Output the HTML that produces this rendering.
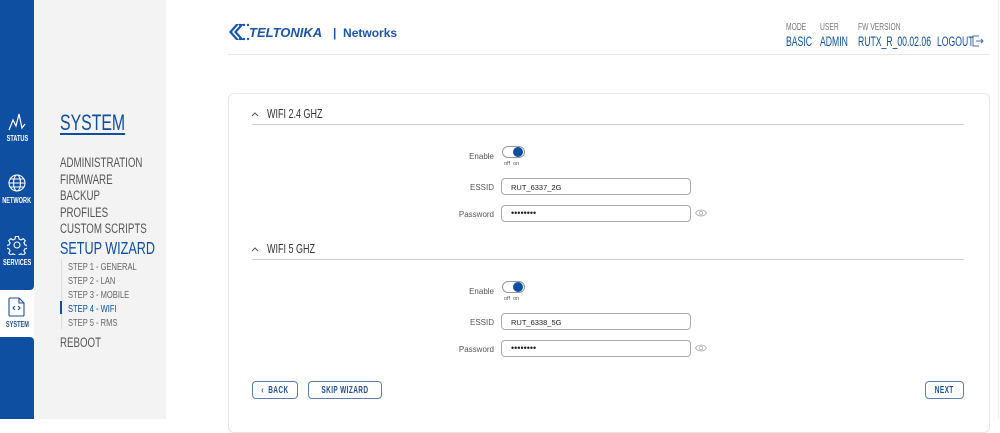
<!DOCTYPE html>
<html><head><meta charset="utf-8"><style>
*{box-sizing:border-box;margin:0;padding:0}
body{width:1000px;height:419px;overflow:hidden;background:#fff;font-family:"Liberation Sans",sans-serif;position:relative}
.a{position:absolute}
.n{transform:scaleX(.72);transform-origin:left top;white-space:nowrap}
.h{transform:scaleX(.64);transform-origin:left top;white-space:nowrap}
.blue{color:#0e4fa1}
.sb{left:0;width:34px;background:#0e4fa1}
.ic{left:0;width:34px;color:#fff;font-size:8px;font-weight:bold;display:flex;justify-content:center}
.ic span{display:inline-block;transform:scaleX(.7);white-space:nowrap}
.menu{left:60px;font-size:13.5px;color:#555}
.step{left:68px;font-size:10.5px;color:#666}
.lbl{font-size:8px;color:#555;text-align:right;width:60px}
.inp{left:501px;width:190px;height:17px;border:1px solid #aaa;border-radius:4px;font-size:7.5px;color:#222;padding:4px 0 0 9px}
.btn{height:18px;border:1.5px solid #5a7fb0;border-radius:4px;color:#1e4f90;font-size:10.5px;font-weight:bold;display:flex;justify-content:center;align-items:center}
.btn span{display:inline-block;transform:scaleX(.62);white-space:nowrap;letter-spacing:.6px}
</style></head><body>
<div class="a sb" style="top:0;height:290px;border-radius:0 0 4px 0"></div>
<div class="a sb" style="top:337px;height:82px;border-radius:0 4px 0 0"></div>
<div class="a" style="left:34px;top:0;width:132px;height:419px;background:#f3f3f3"></div>
<svg class="a" style="left:8px;top:112px" width="18" height="20" viewBox="0 0 18 20" fill="none" stroke="#fff" stroke-width="1.2"><path d="M1 18 L5 8 L8 14 L11 2 L14 16 L17 12"/></svg>
<div class="a ic" style="top:134px"><span>STATUS</span></div>
<svg class="a" style="left:8px;top:174px" width="18" height="18" viewBox="0 0 18 18" fill="none" stroke="#fff" stroke-width="1.1"><circle cx="9" cy="9" r="8"/><ellipse cx="9" cy="9" rx="3.5" ry="8"/><path d="M1 9H17M2.5 5H15.5M2.5 13H15.5"/></svg>
<div class="a ic" style="top:196px"><span>NETWORK</span></div>
<svg class="a" style="left:7px;top:235px" width="20" height="20" viewBox="0 0 20 20" fill="none" stroke="#fff" stroke-width="1.1"><circle cx="10" cy="10" r="3"/><path d="M8.5 1.5h3l.5 2.5 2 1 2.2-1.4 2.1 2.1-1.4 2.2 1 2 2.5.5v3l-2.5.5-1 2 1.4 2.2-2.1 2.1-2.2-1.4-2 1-.5 2.5h-3l-.5-2.5-2-1-2.2 1.4-2.1-2.1 1.4-2.2-1-2-2.5-.5v-3l2.5-.5 1-2-1.4-2.2 2.1-2.1 2.2 1.4 2-1z"/></svg>
<div class="a ic" style="top:258px"><span>SERVICES</span></div>
<svg class="a" style="left:8px;top:297px" width="17" height="20" viewBox="0 0 17 20" fill="none" stroke="#1e4f90" stroke-width="1.1"><path d="M2 1h9l5 5v12a1 1 0 0 1-1 1H2a1 1 0 0 1-1-1V2a1 1 0 0 1 1-1z M11 1v5h5"/><path d="M7 9l-2 2 2 2M10 9l2 2-2 2"/></svg>
<div class="a ic" style="top:320px;color:#1e4f90"><span>SYSTEM</span></div>
<div class="a blue n" style="left:60px;top:110px;font-size:22px;text-decoration:underline;text-underline-offset:3px">SYSTEM</div>
<div class="a menu n" style="top:155px">ADMINISTRATION</div>
<div class="a menu n" style="top:172px">FIRMWARE</div>
<div class="a menu n" style="top:188px">BACKUP</div>
<div class="a menu n" style="top:205px">PROFILES</div>
<div class="a menu n" style="top:221px">CUSTOM SCRIPTS</div>
<div class="a blue n" style="left:60px;top:238px;font-size:17.5px">SETUP WIZARD</div>
<div class="a" style="left:61px;top:259px;width:1px;height:70px;background:#ddd"></div>
<div class="a" style="left:60px;top:301px;width:2px;height:13px;background:#0e4fa1"></div>
<div class="a step n" style="top:261px">STEP 1 - GENERAL</div>
<div class="a step n" style="top:275px">STEP 2 - LAN</div>
<div class="a step n" style="top:289px">STEP 3 - MOBILE</div>
<div class="a step n" style="top:303px;color:#0e4fa1">STEP 4 - WIFI</div>
<div class="a step n" style="top:317px">STEP 5 - RMS</div>
<div class="a menu n" style="top:335px">REBOOT</div>
<svg class="a" style="left:228px;top:23px" width="22" height="18" viewBox="0 0 22 18" fill="#1a56a8"><path d="M8 1L1 9l7 8h3L4 9l7-8z M13 1L6 9l7 8h3L9 9l7-8z"/><circle cx="12" cy="2" r="1.2"/><circle cx="16" cy="2" r="1.2"/><circle cx="20" cy="2" r="1.2"/><circle cx="12" cy="16" r="1.2"/><circle cx="16" cy="16" r="1.2"/><circle cx="20" cy="16" r="1.2"/></svg>
<div class="a" style="left:249px;top:25px;font-size:13px;font-weight:bold;font-style:italic;color:#1a56a8">TELTONIKA</div>
<div class="a" style="left:333px;top:26px;font-size:12px;font-weight:bold;color:#1a56a8">|&nbsp; Networks</div>
<div class="a" style="left:228px;top:54px;width:762px;height:1px;background:#e8e8e8"></div>
<div class="a h" style="left:786px;top:21px;font-size:10.5px;color:#777">MODE</div>
<div class="a h" style="left:820px;top:21px;font-size:10.5px;color:#777">USER</div>
<div class="a h" style="left:858px;top:21px;font-size:10.5px;color:#777">FW VERSION</div>
<div class="a blue h" style="left:786px;top:34px;font-size:13.5px">BASIC</div>
<div class="a blue h" style="left:820px;top:34px;font-size:13.5px">ADMIN</div>
<div class="a blue h" style="left:858px;top:34px;font-size:13.5px">RUTX_R_00.02.06</div>
<div class="a blue h" style="left:937px;top:34px;font-size:13.5px">LOGOUT</div>
<svg class="a" style="left:972px;top:35px" width="12" height="12" viewBox="0 0 12 12" fill="none" stroke="#3f6fb0" stroke-width="1"><path d="M7 1H1v10h6M4 6h7M9 4l2 2-2 2"/></svg>
<div class="a" style="left:228px;top:93px;width:762px;height:340px;border:1px solid #e6e6e6;border-radius:6px"></div>
<div class="a" style="left:998px;top:0;width:1px;height:419px;background:#eee"></div>
<svg class="a" style="left:251px;top:111px" width="8" height="6" viewBox="0 0 8 6" fill="none" stroke="#555" stroke-width="1"><path d="M1 5L4 2L7 5"/></svg>
<div class="a n" style="left:267px;top:107px;font-size:12.5px;color:#333">WIFI 2.4 GHZ</div>
<div class="a" style="left:252px;top:124px;width:712px;height:1px;background:#ccc"></div>
<svg class="a" style="left:251px;top:246px" width="8" height="6" viewBox="0 0 8 6" fill="none" stroke="#555" stroke-width="1"><path d="M1 5L4 2L7 5"/></svg>
<div class="a n" style="left:267px;top:242px;font-size:12.5px;color:#333">WIFI 5 GHZ</div>
<div class="a" style="left:252px;top:259px;width:712px;height:1px;background:#ccc"></div>
<div class="a lbl" style="left:434px;top:152px">Enable</div>
<div class="a" style="left:502px;top:146px;width:23px;height:12px;border:1px solid #999;border-radius:7px"></div>
<div class="a" style="left:513px;top:147px;width:10px;height:10px;border-radius:50%;background:#0e4fa1"></div>
<div class="a" style="left:504px;top:161px;font-size:5.5px;color:#555">off&nbsp; on</div>
<div class="a lbl" style="left:434px;top:183px">ESSID</div>
<div class="a inp" style="top:178px">RUT_6337_2G</div>
<div class="a lbl" style="left:434px;top:210px">Password</div>
<div class="a inp" style="top:205px;font-size:9px;padding-top:2px">&#8226;&#8226;&#8226;&#8226;&#8226;&#8226;&#8226;&#8226;</div>
<svg class="a" style="left:695px;top:209px" width="12" height="8" viewBox="0 0 12 8" fill="none" stroke="#aaa" stroke-width=".8"><path d="M.5 4C3 0 9 0 11.5 4 9 8 3 8 .5 4z"/><circle cx="6" cy="4" r="1.8"/></svg>
<div class="a lbl" style="left:434px;top:287px">Enable</div>
<div class="a" style="left:502px;top:281px;width:23px;height:12px;border:1px solid #999;border-radius:7px"></div>
<div class="a" style="left:513px;top:282px;width:10px;height:10px;border-radius:50%;background:#0e4fa1"></div>
<div class="a" style="left:504px;top:296px;font-size:5.5px;color:#555">off&nbsp; on</div>
<div class="a lbl" style="left:434px;top:318px">ESSID</div>
<div class="a inp" style="top:313px">RUT_6338_5G</div>
<div class="a lbl" style="left:434px;top:345px">Password</div>
<div class="a inp" style="top:340px;font-size:9px;padding-top:2px">&#8226;&#8226;&#8226;&#8226;&#8226;&#8226;&#8226;&#8226;</div>
<svg class="a" style="left:695px;top:344px" width="12" height="8" viewBox="0 0 12 8" fill="none" stroke="#aaa" stroke-width=".8"><path d="M.5 4C3 0 9 0 11.5 4 9 8 3 8 .5 4z"/><circle cx="6" cy="4" r="1.8"/></svg>
<div class="a btn" style="left:252px;top:381px;width:46px"><span>&lsaquo;&nbsp; BACK</span></div>
<div class="a btn" style="left:308px;top:381px;width:74px"><span>SKIP WIZARD</span></div>
<div class="a btn" style="left:925px;top:381px;width:39px"><span>NEXT</span></div>
</body></html>
